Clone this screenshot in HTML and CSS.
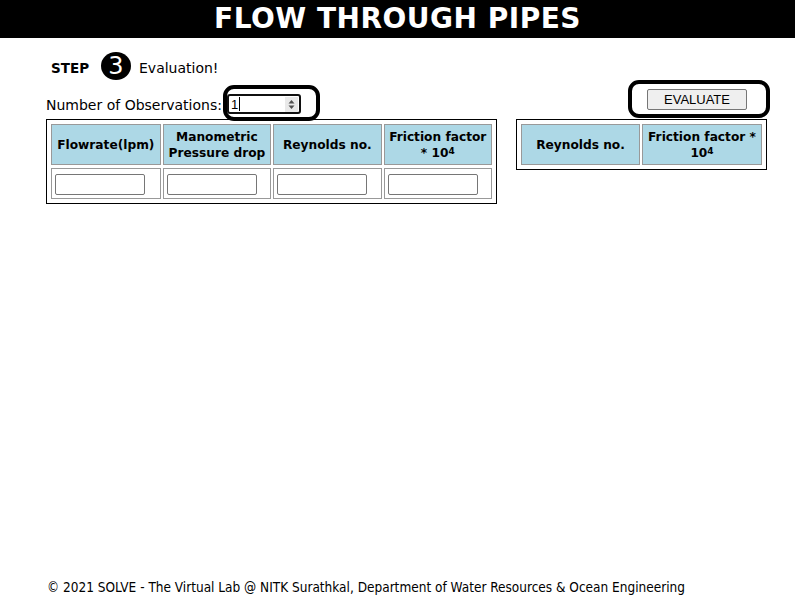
FILE: index.html
```html
<!DOCTYPE html>
<html>
<head>
<meta charset="utf-8">
<title>Flow Through Pipes</title>
<link rel="stylesheet" href="styles.css">
</head>
<body>
<header class="topbar">
  <h1 class="title">FLOW THROUGH PIPES</h1>
</header>
<main class="content">
  <div class="step">
    <span class="step-label">STEP</span>
    <span class="step-num">3</span>
    <span class="step-text">Evaluation!</span>
  </div>
  <div class="panels">
    <section class="panel panel-left">
      <div class="controls">
        <label class="obs-label">Number of Observations:</label>
        <span class="ring-wrap">
          <span class="numbox">
            <span class="numval">1</span><span class="caret"></span>
            <svg class="spin" width="13" height="15" viewBox="0 0 13 15"><rect width="13" height="15" fill="#e9e9e9"/><path d="M3.5 6.5h6L6.5 3z" fill="#505050"/><path d="M3.5 8.5h6L6.5 12z" fill="#505050"/></svg>
          </span>
          <span class="ring ring-input"></span>
        </span>
      </div>
      <table class="grid">
        <tr>
          <th class="c1">Flowrate(lpm)</th>
          <th class="c2">Manometric Pressure drop</th>
          <th class="c3">Reynolds no.</th>
          <th class="c4">Friction factor * 10<sup>4</sup></th>
        </tr>
        <tr>
          <td><input class="cell-input" type="text"></td>
          <td><input class="cell-input" type="text"></td>
          <td><input class="cell-input" type="text"></td>
          <td><input class="cell-input" type="text"></td>
        </tr>
      </table>
    </section>
    <section class="panel panel-right">
      <div class="controls controls-right">
        <span class="ring-wrap">
          <button class="eval-btn" type="button">EVALUATE</button>
          <span class="ring ring-btn"></span>
        </span>
      </div>
      <table class="grid grid-right">
        <tr>
          <th class="r1">Reynolds no.</th>
          <th class="r2">Friction factor * 10<sup>4</sup></th>
        </tr>
      </table>
    </section>
  </div>
</main>
<footer class="footer">© 2021 SOLVE - The Virtual Lab @ NITK Surathkal, Department of Water Resources &amp; Ocean Engineering</footer>
</body>
</html>
```
FILE: styles.css
```css
html, body {
  margin: 0;
  padding: 0;
}
body {
  font-family: "DejaVu Sans", Verdana, sans-serif;
  color: #000;
  background: #fff;
  min-height: 100vh;
  display: flex;
  flex-direction: column;
}
.topbar {
  background: #000;
  height: 38px;
  display: flex;
  align-items: center;
  justify-content: center;
}
.title {
  margin: 0;
  color: #fff;
  font-size: 28px;
  font-weight: bold;
  line-height: 38px;
  letter-spacing: 0.5px;
}
.content {
  padding: 0 0 0 46px;
}
.step {
  display: flex;
  align-items: center;
  height: 28px;
  margin-top: 14px;
}
.step-label {
  font-size: 13.5px;
  font-weight: bold;
  margin-left: 5px;
  width: 50px;
  margin-top: 4px;
}
.step-num {
  width: 30px;
  height: 28px;
  border-radius: 50%;
  background: #000;
  color: #fff;
  font-size: 24px;
  line-height: 28px;
  text-align: center;
}
.step-text {
  font-size: 14px;
  margin-left: 8px;
  margin-top: 4px;
}
.panels {
  display: flex;
  align-items: flex-start;
  margin-top: 9px;
}
.panel-left {
  width: 451px;
}
.panel-right {
  margin-left: 19px;
  width: 251px;
}
.controls {
  height: 30px;
  display: flex;
  align-items: center;
}
.controls-right {
  justify-content: flex-end;
  padding-right: 20px;
  align-items: flex-start;
}
.obs-label {
  font-size: 14px;
  margin-top: 2px;
}
.ring-wrap {
  position: relative;
  display: inline-block;
}
.numbox {
  display: flex;
  align-items: center;
  width: 67px;
  height: 16px;
  border: 2px solid #101010;
  border-radius: 3px;
  margin-left: 5px;
  margin-top: 0;
  padding: 0 1px 0 2px;
  font-family: "Liberation Sans", Arial, sans-serif;
  font-size: 13px;
}
.numval {
  color: #000;
  line-height: 15px;
}
.caret {
  width: 1px;
  height: 14px;
  background: #000;
  margin-left: 1px;
}
.spin {
  margin-left: auto;
  display: block;
}
.ring {
  position: absolute;
  border: 4px solid #000;
  border-radius: 11px;
  pointer-events: none;
}
.ring-input {
  left: 1px;
  top: -9px;
  width: 89px;
  height: 28px;
}
.ring-btn {
  left: -19px;
  top: -9px;
  width: 134px;
  height: 30px;
}
.eval-btn {
  display: block;
  width: 100px;
  height: 21px;
  margin-top: 0;
  background: #efefef;
  border: 1px solid #767676;
  border-radius: 2px;
  font-family: "Liberation Sans", Arial, sans-serif;
  font-size: 13px;
  color: #000;
  padding: 0;
}
.grid {
  border: 1px solid #000;
  border-spacing: 2px 3px;
  padding: 1px 2px;
  margin: 0;
  table-layout: fixed;
}
.grid th {
  background: #add8e6;
  border: 1px solid #999;
  font-size: 12.2px;
  font-weight: bold;
  line-height: 16px;
  height: 39px;
  padding: 0 2px;
  text-align: center;
  vertical-align: middle;
}
.grid sup {
  font-size: 9px;
  line-height: 0;
  vertical-align: 3px;
}
.grid td {
  border: 1px solid #999;
  padding: 3px;
  height: 23px;
}
.c1 { width: 104px; }
.c2 { width: 103px; }
.c3 { width: 103px; }
.c4 { width: 103px; }
.r1 { width: 113px; }
.r2 { width: 114px; }
.cell-input {
  display: block;
  width: 84px;
  height: 17px;
  border: 1px solid #767676;
  border-radius: 2px;
  padding: 1px 2px;
  margin: 1px 0 0 0;
}
.footer {
  margin-top: auto;
  padding: 0 0 8px 47px;
  font-family: "DejaVu Sans Condensed", "DejaVu Sans", sans-serif;
  font-size: 13.5px;
  line-height: 16px;
}
```
